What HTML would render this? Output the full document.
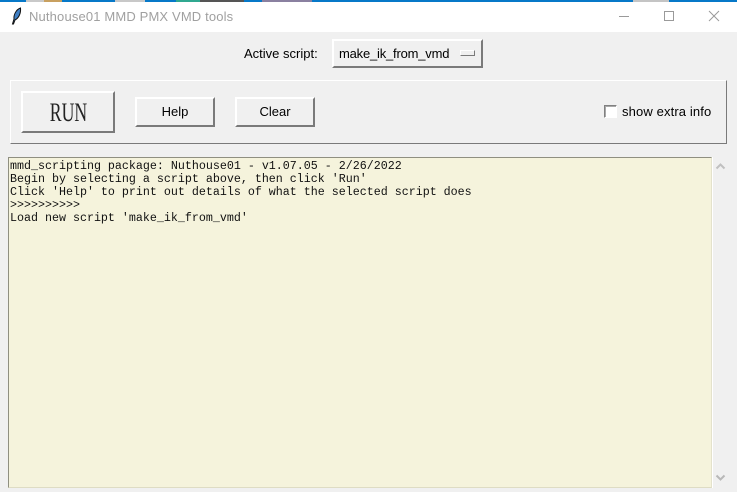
<!DOCTYPE html>
<html><head><meta charset="utf-8"><style>
html,body{margin:0;padding:0;width:737px;height:492px;overflow:hidden;background:#f0f0f0}
body{position:relative;font-family:"Liberation Sans","DejaVu Sans",sans-serif;font-size:13px;color:#000}
.a{position:absolute;box-sizing:border-box}
.t{position:absolute;white-space:nowrap;line-height:16px}
.b{position:absolute;box-sizing:border-box;background:#f0f0f0;border:2px solid;border-color:#fff #7a7a7a #7a7a7a #fff;outline:0;text-align:center}
pre{position:absolute;margin:0;left:10px;top:160px;font:11.67px/13px "Liberation Mono",monospace;color:#111}
</style></head><body>
<div class="a" style="left:0;top:0;width:737px;height:2px;background:#0678c8"></div>
<div class="a" style="left:26px;top:0;width:18px;height:2px;background:#c9c9c9"></div>
<div class="a" style="left:44px;top:0;width:18px;height:2px;background:#c8a060"></div>
<div class="a" style="left:115px;top:0;width:30px;height:2px;background:#c8c8c8"></div>
<div class="a" style="left:176px;top:0;width:24px;height:2px;background:#30a890"></div>
<div class="a" style="left:200px;top:0;width:44px;height:2px;background:#555"></div>
<div class="a" style="left:262px;top:0;width:50px;height:2px;background:#8a80a0"></div>
<div class="a" style="left:633px;top:0;width:36px;height:2px;background:#c4c4c4"></div>
<div class="a" style="left:0;top:2px;width:737px;height:30px;background:#fff"></div>
<svg class="a" style="left:10px;top:6px" width="12" height="20" viewBox="0 0 12 20"><path d="M2.500 18L4 13C3.500 9 6 3.500 10.500 2C11 7 9 12 5 14L3.500 18Z" fill="#3f7fc4" stroke="#111" stroke-width="1"/></svg>
<div class="t" style="left:29px;top:9px;color:#a0a0a0;font-size:13px;letter-spacing:.15px">Nuthouse01 MMD PMX VMD tools</div>
<svg class="a" style="left:610px;top:8px" width="127" height="20"><path d="M9 8.500H19" stroke="#9a9a9a"/><rect x="54.500" y="3.500" width="9" height="9" fill="none" stroke="#9a9a9a"/><path d="M99 3L109 13M109 3L99 13" stroke="#9a9a9a" fill="none"/></svg>

<div class="t" style="left:244px;top:46px">Active script:</div>
<div class="b" style="left:332px;top:39px;width:151px;height:29px"></div>
<div class="t" style="left:339px;top:46px;letter-spacing:-.2px">make_ik_from_vmd</div>
<div class="b" style="left:460px;top:50px;width:15px;height:6px;border-width:1px"></div>

<div class="a" style="left:10px;top:80px;width:717px;height:64px;border:1px solid;border-color:#fff #7a7a7a #7a7a7a #fff"></div>
<div class="b" style="left:21px;top:91px;width:94px;height:42px;font:26px/39px 'Liberation Serif',serif;color:#222"><span style="display:inline-block;transform:scaleX(.68)">RUN</span></div>
<div class="b" style="left:135px;top:97px;width:80px;height:30px;line-height:26px">Help</div>
<div class="b" style="left:235px;top:97px;width:80px;height:30px;line-height:26px">Clear</div>
<div class="a" style="left:604px;top:105px;width:13px;height:13px;background:#fff;border:1px solid;border-color:#808080 #fff #fff #808080;box-shadow:inset 1px 1px 0 #a8a8a8"></div>
<div class="t" style="left:622px;top:104px;letter-spacing:.13px">show extra info</div>

<div class="a" style="left:8px;top:157px;width:704px;height:331px;background:#f5f3dc;border:1px solid;border-color:#8f8f80 #e4e2cc #dedcc4 #8f8f80"></div>
<pre>mmd_scripting package: Nuthouse01 - v1.07.05 - 2/26/2022
Begin by selecting a script above, then click 'Run'
Click 'Help' to print out details of what the selected script does
&gt;&gt;&gt;&gt;&gt;&gt;&gt;&gt;&gt;&gt;
Load new script 'make_ik_from_vmd'</pre>
<div class="a" style="left:712px;top:157px;width:1px;height:331px;background:#fff"></div>
<svg class="a" style="left:715px;top:162px" width="12" height="8"><path d="M1.500 6.500L5.500 2.500L9.500 6.500" fill="none" stroke="#c0c0c0" stroke-width="2"/></svg>
<svg class="a" style="left:715px;top:474px" width="12" height="8"><path d="M1.500 1.500L5.500 5.500L9.500 1.500" fill="none" stroke="#b8b8b8" stroke-width="2"/></svg>
</body></html>
